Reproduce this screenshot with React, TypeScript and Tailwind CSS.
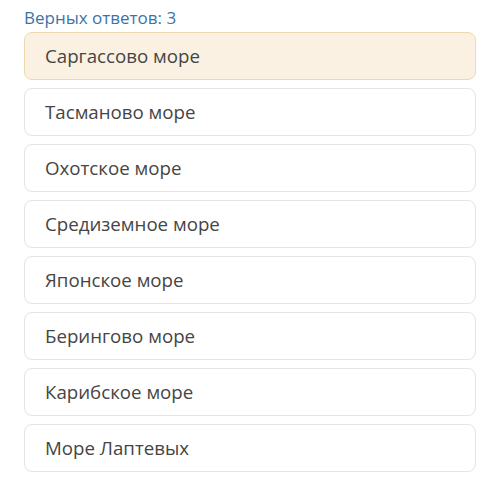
const options = [
  "Саргассово море",
  "Тасманово море",
  "Охотское море",
  "Средиземное море",
  "Японское море",
  "Берингово море",
  "Карибское море",
  "Море Лаптевых",
];

export default function App() {
  return (
    <div className="h-[500px] w-[500px] bg-white px-6 pt-[5px] font-['Open_Sans',sans-serif]">
      <div className="text-[17px] leading-[26px] text-[#3d72a6]">Верных ответов: 3</div>
      <div className="mt-[1px] flex w-[452px] flex-col gap-[8px]">
        {options.map((o, i) => (
          <div
            key={o}
            className={
              i === 0
                ? "flex h-[48px] items-center rounded-lg border border-[#ecd9b0] bg-[#fbf1e2] px-5 text-[18.7px] text-[#454545]"
                : "flex h-[48px] items-center rounded-lg border border-[#e4e4e4] bg-white px-5 text-[18.7px] text-[#454545]"
            }
          >
            {o}
          </div>
        ))}
      </div>
    </div>
  );
}
